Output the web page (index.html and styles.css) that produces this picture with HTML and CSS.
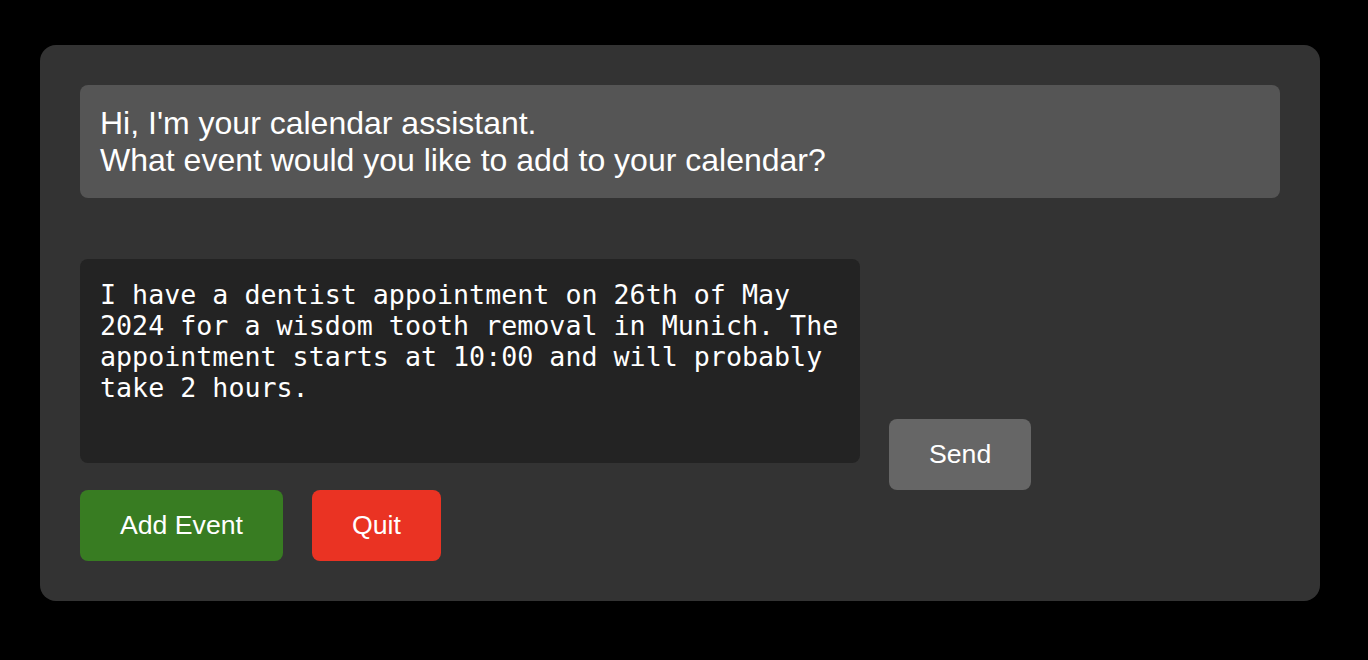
FILE: index.html
```
<!DOCTYPE html>
<html lang="en">
<head>
<meta charset="utf-8">
<title>Calendar Assistant</title>
<link rel="stylesheet" href="styles.css">
</head>
<body>
<div class="card">
  <div class="message">Hi, I'm your calendar assistant.<br>What event would you like to add to your calendar?</div>
  <div class="input-row">
    <textarea class="prompt">I have a dentist appointment on 26th of May 2024 for a wisdom tooth removal in Munich. The appointment starts at 10:00 and will probably take 2 hours.</textarea>
    <button class="btn btn-send">Send</button>
  </div>
  <div class="actions">
    <button class="btn btn-add">Add Event</button>
    <button class="btn btn-quit">Quit</button>
  </div>
</div>
</body>
</html>
```
FILE: styles.css
```
html, body {
  margin: 0;
  background: #000;
}
body {
  padding: 45px 40px 0;
  font-family: "Liberation Sans", Arial, sans-serif;
}
.card {
  box-sizing: border-box;
  width: 1280px;
  background: #333;
  border-radius: 16px;
  padding: 40px;
  display: flex;
  flex-direction: column;
}
.message {
  background: #555;
  color: #fff;
  border-radius: 8px;
  padding: 20px;
  font-size: 32px;
  line-height: 36.5px;
}
.input-row {
  margin-top: 61px;
  display: flex;
  align-items: flex-start;
  gap: 29px;
}
.prompt {
  width: 780px;
  height: 204px;
  box-sizing: border-box;
  padding: 20px;
  margin: 0;
  border: none;
  border-radius: 8px;
  background: #232323;
  color: #fff;
  font-family: "DejaVu Sans Mono", monospace;
  font-size: 26.67px;
  line-height: 31px;
  resize: none;
  outline: none;
}
.btn {
  border: none;
  border-radius: 8px;
  color: #fff;
  font-family: "Liberation Sans", Arial, sans-serif;
  font-size: 26.67px;
  line-height: 31px;
  padding: 20px 40px;
  margin: 0;
  cursor: pointer;
}
.btn-send {
  background: #666;
  margin-top: 160px;
}
.actions {
  display: flex;
  gap: 29px;
}
.btn-add {
  background: #387c22;
}
.btn-quit {
  background: #ea3323;
}
```
